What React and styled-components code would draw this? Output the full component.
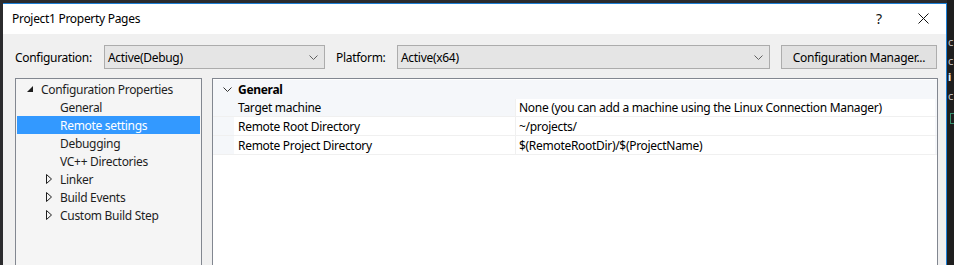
import React from 'react'
import styled, { createGlobalStyle } from 'styled-components'

const GlobalStyle = createGlobalStyle`
  body {
    margin: 0;
    background: #2b2b2d;
    overflow: hidden;
  }
`

const treeItems = [
  { label: 'Configuration Properties', level: 0, arrow: 'open' },
  { label: 'General', level: 1 },
  { label: 'Remote settings', level: 1, selected: true },
  { label: 'Debugging', level: 1 },
  { label: 'VC++ Directories', level: 1 },
  { label: 'Linker', level: 1, arrow: 'closed' },
  { label: 'Build Events', level: 1, arrow: 'closed' },
  { label: 'Custom Build Step', level: 1, arrow: 'closed' },
]

const rows = [
  { name: 'Target machine', value: 'None (you can add a machine using the Linux Connection Manager)', active: true },
  { name: 'Remote Root Directory', value: '~/projects/' },
  { name: 'Remote Project Directory', value: '$(RemoteRootDir)/$(ProjectName)' },
]

function Chevron({ color = '#606060' }) {
  return (
    <svg width="9" height="5" viewBox="0 0 9 5">
      <path d="M0.5 0.5 L4.5 4.5 L8.5 0.5" fill="none" stroke={color} strokeWidth="1" />
    </svg>
  )
}

function Arrow({ kind }) {
  if (kind === 'open') {
    return (
      <svg width="6" height="6" viewBox="0 0 6 6">
        <path d="M6 0 L6 6 L0 6 Z" fill="#1e1e1e" />
      </svg>
    )
  }
  return (
    <svg width="6" height="10" viewBox="0 0 6 10">
      <path d="M0.5 0.5 L5.5 5 L0.5 9.5 Z" fill="none" stroke="#1e1e1e" strokeWidth="1" />
    </svg>
  )
}

function App() {
  return (
    <>
      <GlobalStyle />
      <Screen>
        <Window>
          <TitleBar>
            <Title>Project1 Property Pages</Title>
            <Help>?</Help>
            <Close>
              <svg width="11" height="11" viewBox="0 0 11 11">
                <path d="M0.5 0.5 L10.5 10.5 M10.5 0.5 L0.5 10.5" stroke="#111" strokeWidth="1" />
              </svg>
            </Close>
          </TitleBar>

          <Toolbar>
            <Label width="89px">Configuration:</Label>
            <Combo width="221px">
              <span>Active(Debug)</span>
              <Chevron />
            </Combo>
            <Label width="61px" gap="11px">Platform:</Label>
            <Combo width="373px">
              <span>Active(x64)</span>
              <Chevron />
            </Combo>
            <Button>Configuration Manager...</Button>
          </Toolbar>

          <Content>
            <Tree>
              {treeItems.map(item => (
                <TreeRow key={item.label} selected={item.selected}>
                  <ArrowSlot level={item.level}>
                    {item.arrow && <Arrow kind={item.arrow} />}
                  </ArrowSlot>
                  <TreeText>{item.label}</TreeText>
                </TreeRow>
              ))}
            </Tree>

            <Grid>
              <GroupRow>
                <GroupToggle>
                  <Chevron color="#333" />
                </GroupToggle>
                <GroupTitle>General</GroupTitle>
              </GroupRow>
              {rows.map(r => (
                <PropRow key={r.name}>
                  <Margin width="21px" />
                  <NameCell active={r.active}>{r.name}</NameCell>
                  <ValueCell>{r.value}</ValueCell>
                  <Margin width="2px" />
                </PropRow>
              ))}
            </Grid>
          </Content>
        </Window>

        <Behind>
          <Peek top="36px">c</Peek>
          <Peek top="55px">c</Peek>
          <Peek top="71px" bright>i</Peek>
          <Peek top="90px">c</Peek>
          <PeekBox />
        </Behind>
      </Screen>
    </>
  )
}

export default App

const Screen = styled.div`
  display: flex;
  height: 265px;
  padding: 3px 0 0 3px;
  box-sizing: border-box;
  font-family: 'Segoe UI', 'Noto Sans', sans-serif;
  font-size: 12px;
  letter-spacing: -0.3px;
  color: #1e1e1e;
`

const Window = styled.div`
  width: 943px;
  flex-shrink: 0;
  background: #f0f0f0;
  border-top: 1px solid #1c7fd6;
  border-right: 1px solid #1c7fd6;
  display: flex;
  flex-direction: column;
`

const TitleBar = styled.div`
  height: 30px;
  background: #ffffff;
  display: flex;
  align-items: center;
  padding-left: 9px;
`

const Title = styled.div`
  flex: 1;
  color: #000;
  padding-bottom: 2px;
`

const Help = styled.div`
  width: 14px;
  margin-right: 28px;
  font-size: 14px;
  color: #111;
  padding-bottom: 2px;
`

const Close = styled.div`
  width: 11px;
  margin-right: 17px;
  display: flex;
  margin-bottom: 2px;
`

const Toolbar = styled.div`
  display: flex;
  align-items: center;
  height: 24px;
  margin-top: 11px;
  padding-left: 12px;
`

const Label = styled.div`
  width: ${p => p.width};
  margin-left: ${p => p.gap || '0'};
  flex-shrink: 0;
  color: #000;
`

const Combo = styled.div`
  width: ${p => p.width};
  height: 24px;
  box-sizing: border-box;
  flex-shrink: 0;
  background: #e5e5e5;
  border: 1px solid #acacac;
  display: flex;
  align-items: center;
  justify-content: space-between;
  padding: 0 6px 0 3px;
  color: #000;
`

const Button = styled.div`
  margin-left: 11px;
  width: 156px;
  height: 24px;
  box-sizing: border-box;
  flex-shrink: 0;
  background: #e1e1e1;
  border: 1px solid #adadad;
  display: flex;
  align-items: center;
  justify-content: center;
  color: #000;
`

const Content = styled.div`
  display: flex;
  flex: 1;
  margin-top: 9px;
  padding-left: 12px;
  gap: 10px;
`

const Tree = styled.div`
  width: 187px;
  box-sizing: border-box;
  border: 1px solid #828790;
  border-bottom: none;
  background: #f5f5f5;
  padding: 1px 1px 0;
`

const TreeRow = styled.div`
  height: 18px;
  display: flex;
  align-items: center;
  background: ${p => (p.selected ? '#3399ff' : 'transparent')};
  color: ${p => (p.selected ? '#ffffff' : '#1e1e1e')};
`

const ArrowSlot = styled.div`
  width: 6px;
  margin-left: ${p => (p.level === 0 ? '10px' : '29px')};
  display: flex;
  align-items: center;
`

const TreeText = styled.div`
  margin-left: 8px;
  white-space: nowrap;
`

const Grid = styled.div`
  width: 726px;
  box-sizing: border-box;
  border: 1px solid #828790;
  border-bottom: none;
  background: #ffffff;
  padding-top: 1px;
`

const GroupRow = styled.div`
  height: 18px;
  display: flex;
  align-items: center;
  background: #f5f7fa;
`

const GroupToggle = styled.div`
  width: 24px;
  display: flex;
  justify-content: center;
  margin-left: 2px;
`

const GroupTitle = styled.div`
  font-weight: bold;
  margin-left: -1px;
  color: #000;
`

const PropRow = styled.div`
  height: 19px;
  display: flex;
  border-bottom: 1px solid #f0f0f0;
  box-sizing: border-box;
  &:nth-child(2) {
    border-top: 1px solid #f5f7fa;
  }
`

const Margin = styled.div`
  width: ${p => p.width};
  background: #f5f7fa;
  flex-shrink: 0;
`

const NameCell = styled.div`
  width: 282px;
  flex-shrink: 0;
  padding-left: 4px;
  box-sizing: border-box;
  display: flex;
  align-items: center;
  background: ${p => (p.active ? '#f5f7fa' : '#ffffff')};
  border-right: 1px solid #f0f0f0;
  color: #000;
`

const ValueCell = styled.div`
  flex: 1;
  padding-left: 3px;
  display: flex;
  align-items: center;
  white-space: nowrap;
  color: #000;
`

const Behind = styled.div`
  flex: 1;
  position: relative;
  background: #1e1e1e;
  margin-top: -3px;
  overflow: hidden;
`

const Peek = styled.div`
  position: absolute;
  top: ${p => p.top};
  left: 1px;
  line-height: 11px;
  color: ${p => (p.bright ? '#f0f0f0' : '#c8c8c8')};
  font-weight: ${p => (p.bright ? 'bold' : 'normal')};
  font-size: 11px;
`

const PeekBox = styled.div`
  position: absolute;
  top: 113px;
  left: 3px;
  width: 7px;
  height: 9px;
  border: 1px solid #3a8f6f;
`
